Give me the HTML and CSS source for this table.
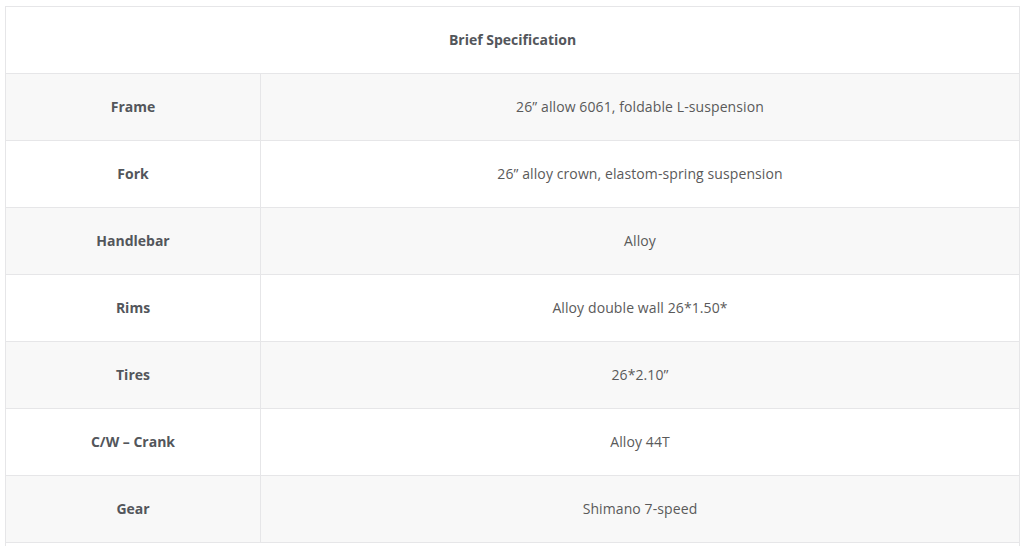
FILE: index.html
```html
<!DOCTYPE html>
<html lang="en">
<head>
<meta charset="utf-8">
<title>Brief Specification</title>
<link rel="stylesheet" href="styles.css">
</head>
<body>
<div class="page">
  <table class="spec">
    <colgroup>
      <col class="col-label">
      <col class="col-value">
    </colgroup>
    <thead>
      <tr><th colspan="2" class="title">Brief Specification</th></tr>
    </thead>
    <tbody>
      <tr><th>Frame</th><td>26” allow 6061, foldable L-suspension</td></tr>
      <tr><th>Fork</th><td>26” alloy crown, elastom-spring suspension</td></tr>
      <tr><th>Handlebar</th><td>Alloy</td></tr>
      <tr><th>Rims</th><td>Alloy double wall 26*1.50*</td></tr>
      <tr><th>Tires</th><td>26*2.10”</td></tr>
      <tr><th>C/W – Crank</th><td>Alloy 44T</td></tr>
      <tr><th>Gear</th><td>Shimano 7-speed</td></tr>
      <tr class="tail"><td colspan="2"></td></tr>
    </tbody>
  </table>
</div>
</body>
</html>
```

FILE: styles.css
```css
html, body {
  margin: 0;
  padding: 0;
  background: #ffffff;
}
body {
  font-family: "Open Sans", "Liberation Sans", sans-serif;
  font-size: 14px;
  color: #5a5a5a;
}
.page {
  padding: 6px 4px 0 5px;
}
.spec {
  width: 1015px;
  border-collapse: collapse;
  table-layout: fixed;
}
.col-label {
  width: 255px;
}
.spec th,
.spec td {
  border: 1px solid #e6e6e8;
  height: 66px;
  padding: 0 10px;
  text-align: center;
  vertical-align: middle;
  line-height: 20px;
}
.spec th {
  font-weight: 700;
  color: #53565b;
}
.spec td {
  font-weight: 400;
  color: #5a5a5a;
  letter-spacing: 0.1px;
}
.spec thead th {
  background: #ffffff;
}
.spec tbody tr:nth-child(odd) th,
.spec tbody tr:nth-child(odd) td {
  background: #f8f8f8;
}
.spec tbody tr:nth-child(even) th,
.spec tbody tr:nth-child(even) td {
  background: #ffffff;
}
```
